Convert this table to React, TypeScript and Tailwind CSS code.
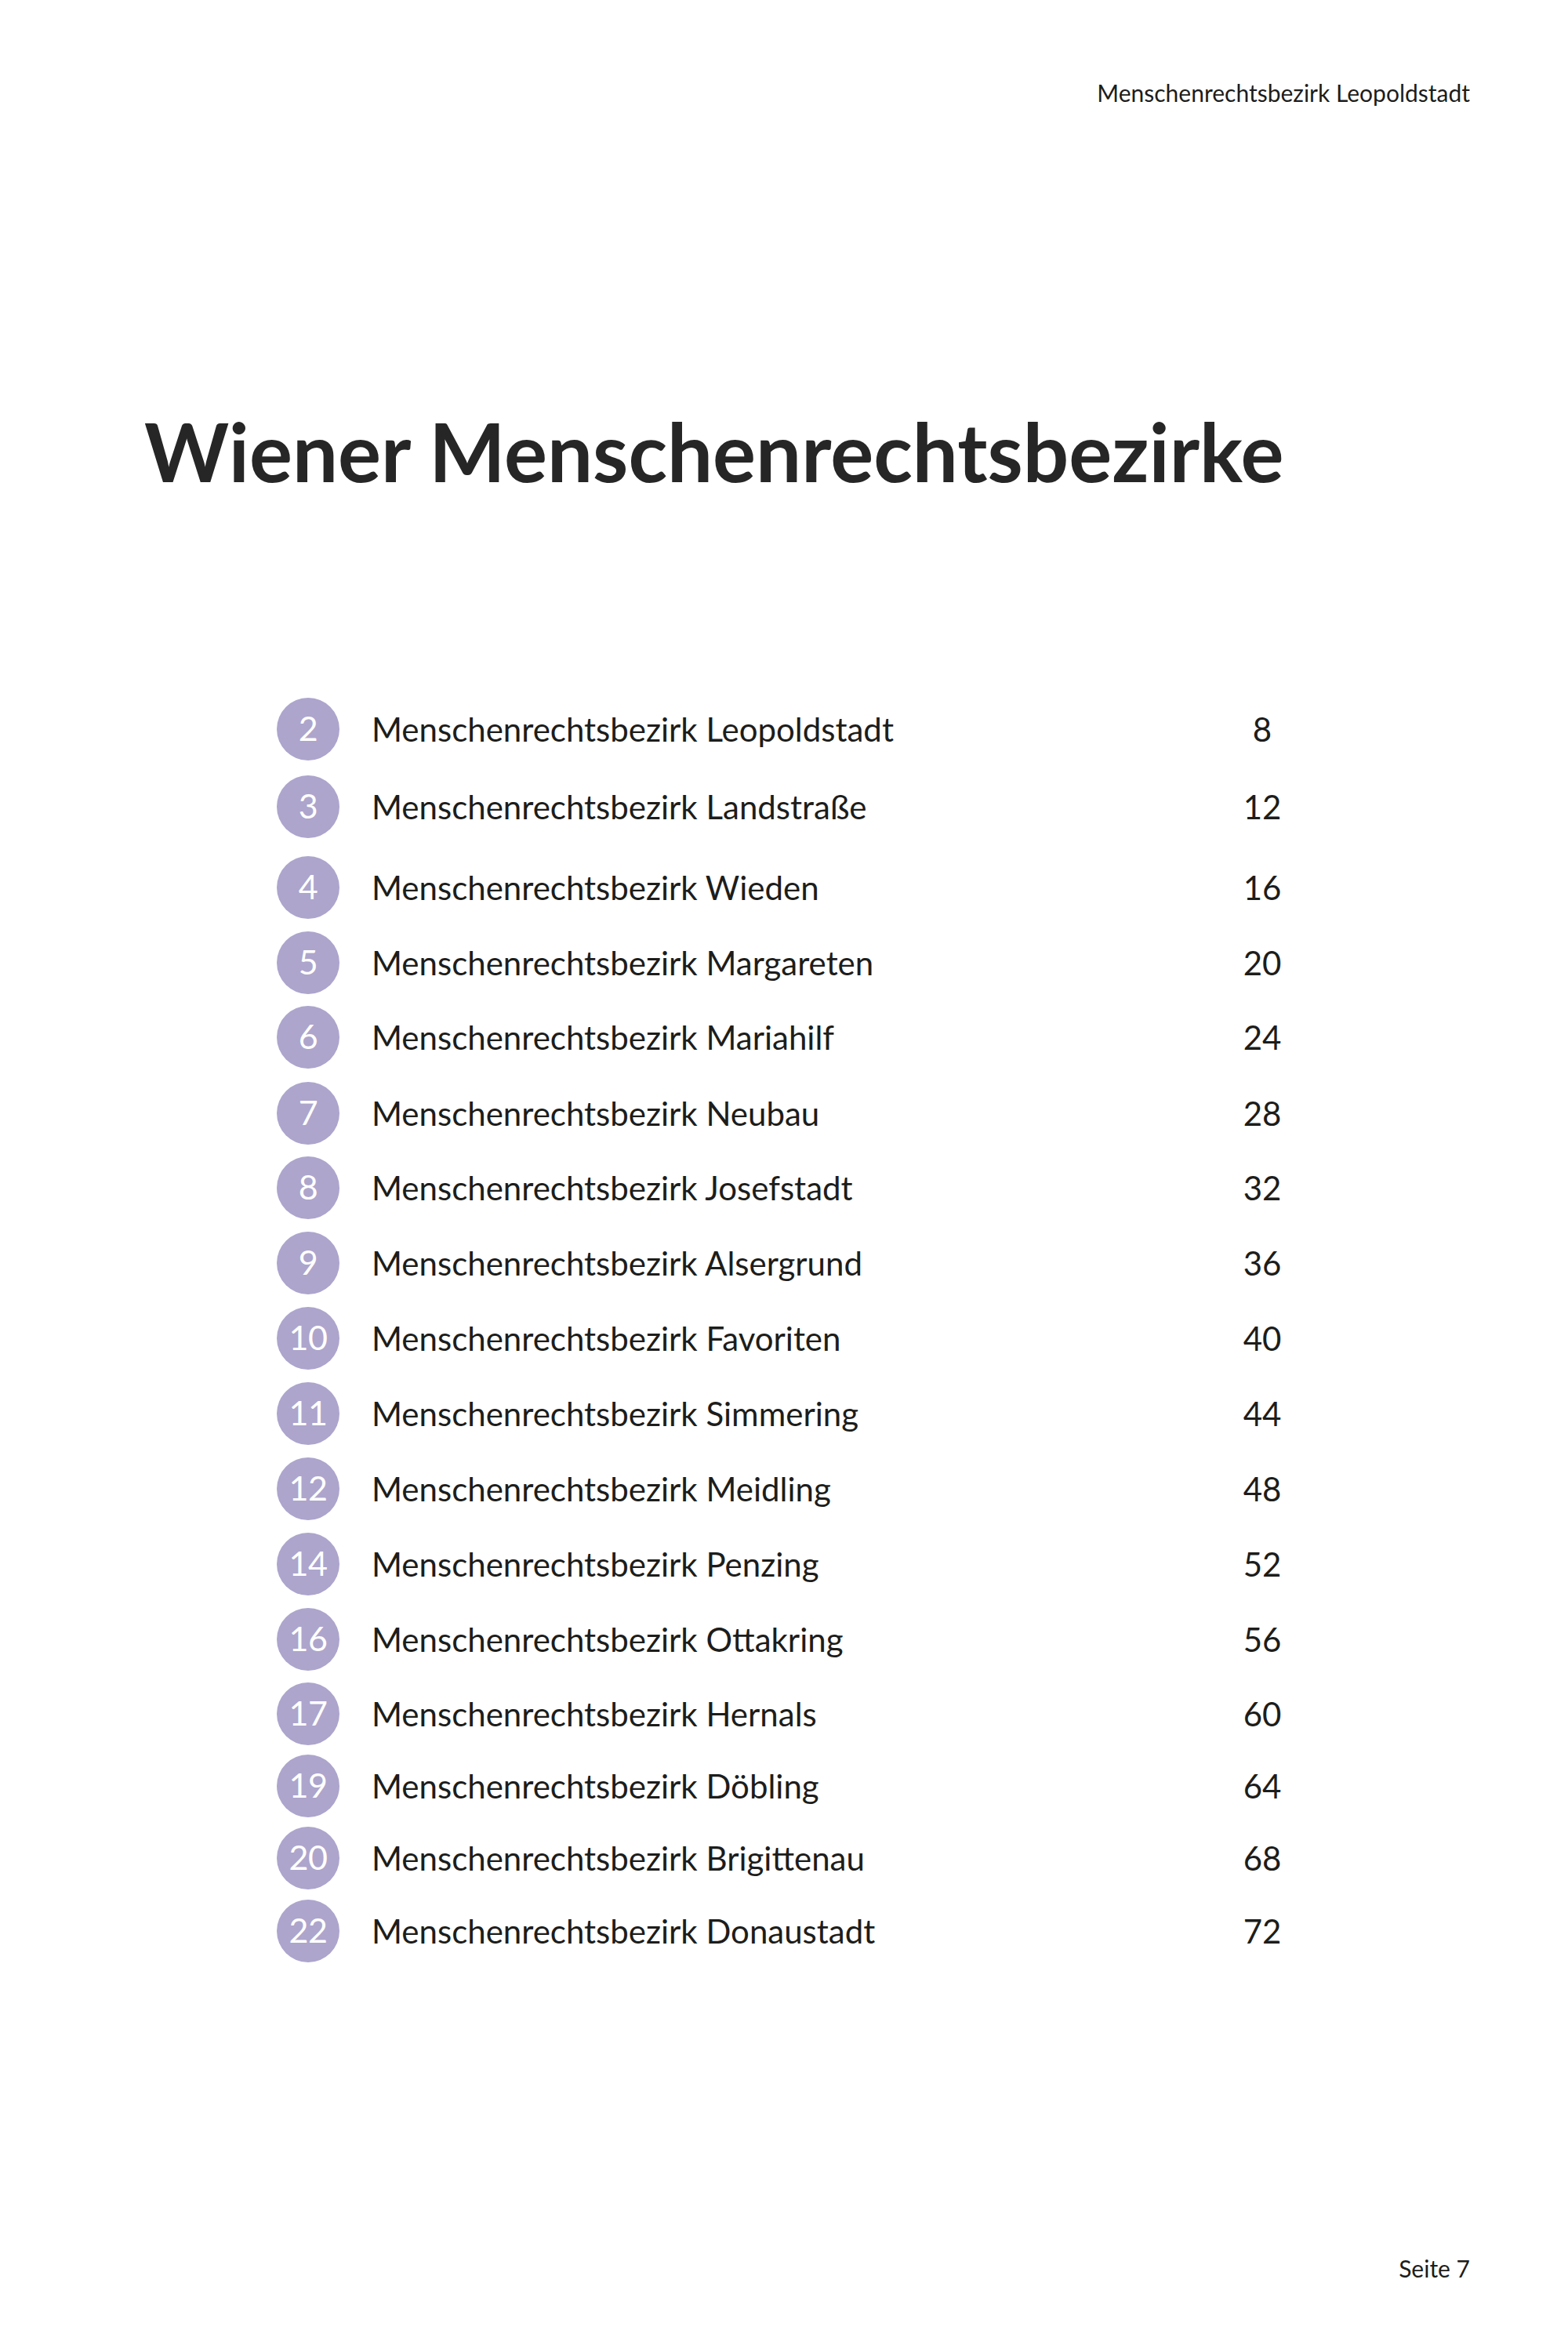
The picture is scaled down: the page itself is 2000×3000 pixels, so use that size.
import React from "react";

const districts = [
  { nr: "2", name: "Leopoldstadt", page: "8", gap: "mt-0" },
  { nr: "3", name: "Landstraße", page: "12", gap: "mt-[19px]" },
  { nr: "4", name: "Wieden", page: "16", gap: "mt-[23px]" },
  { nr: "5", name: "Margareten", page: "20", gap: "mt-[16px]" },
  { nr: "6", name: "Mariahilf", page: "24", gap: "mt-[15px]" },
  { nr: "7", name: "Neubau", page: "28", gap: "mt-[17px]" },
  { nr: "8", name: "Josefstadt", page: "32", gap: "mt-[15px]" },
  { nr: "9", name: "Alsergrund", page: "36", gap: "mt-[16px]" },
  { nr: "10", name: "Favoriten", page: "40", gap: "mt-[16px]" },
  { nr: "11", name: "Simmering", page: "44", gap: "mt-[16px]" },
  { nr: "12", name: "Meidling", page: "48", gap: "mt-[16px]" },
  { nr: "14", name: "Penzing", page: "52", gap: "mt-[16px]" },
  { nr: "16", name: "Ottakring", page: "56", gap: "mt-[16px]" },
  { nr: "17", name: "Hernals", page: "60", gap: "mt-[15px]" },
  { nr: "19", name: "Döbling", page: "64", gap: "mt-[12px]" },
  { nr: "20", name: "Brigittenau", page: "68", gap: "mt-[12px]" },
  { nr: "22", name: "Donaustadt", page: "72", gap: "mt-[13px]" },
];

const App = () => {
  return (
    <div className="w-[2000px] h-[3000px] bg-white flex flex-col font-['Lato','Open_Sans',sans-serif] text-[#1d1d1b]">
      <div className="pt-[103px] pr-[125px] flex justify-end">
        <div className="text-[30px] leading-none">Menschenrechtsbezirk Leopoldstadt</div>
      </div>

      <h1 className="mt-[391px] pl-[184px] text-[103px] leading-none font-bold text-[#262626]">
        Wiener Menschenrechtsbezirke
      </h1>

      <div className="mt-[263px] pl-[353px] flex flex-col">
        {districts.map(d => (
          <div key={d.nr} className={`${d.gap} h-[80px] flex items-center`}>
            <div className="w-[80px] h-[80px] rounded-full bg-[#ada5cc] flex items-center justify-center">
              <span className="text-[43px] leading-none font-normal text-white -mt-[4px] tracking-[-0.5px]">
                {d.nr}
              </span>
            </div>
            <div className="ml-[41px] w-[1086px] text-[42px] leading-none">Menschenrechtsbezirk {d.name}</div>
            <div className="w-[100px] text-center text-[42px] leading-none">{d.page}</div>
          </div>
        ))}
      </div>

      <div className="mt-auto pb-[92px] pr-[125px] flex justify-end">
        <div className="text-[30px] leading-none">Seite 7</div>
      </div>
    </div>
  );
};

export default App;
